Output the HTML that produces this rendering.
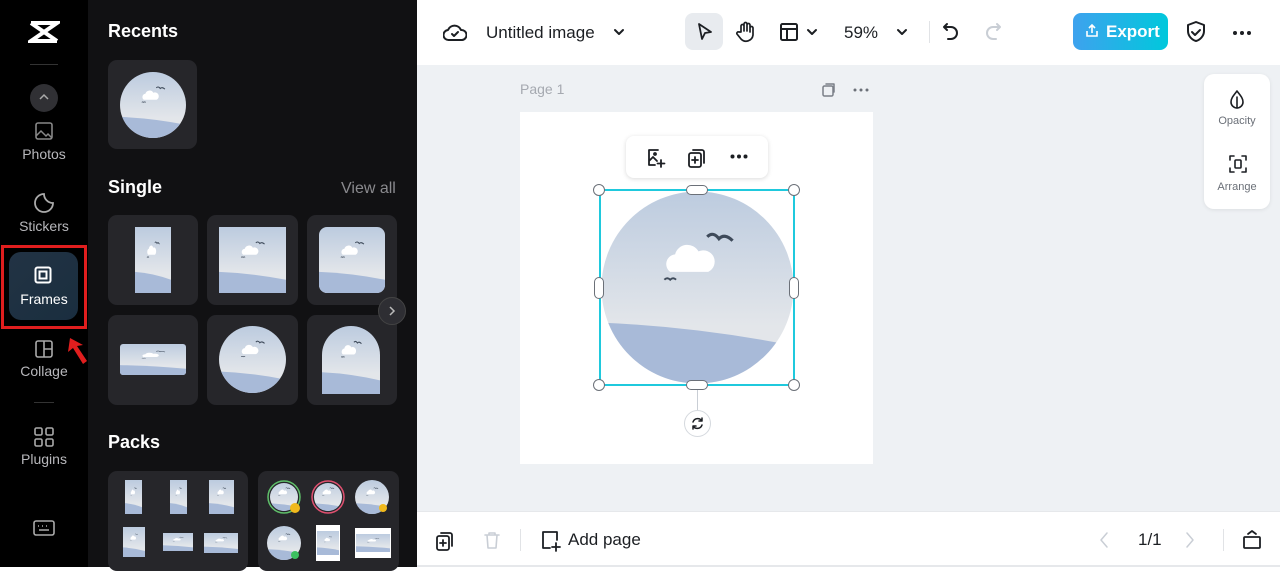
<!DOCTYPE html>
<html><head><meta charset="utf-8"><style>
*{margin:0;padding:0;box-sizing:border-box}
body{width:1280px;height:567px;overflow:hidden;font-family:"Liberation Sans",sans-serif;background:#fff;position:relative}
.a{position:absolute}
.nav{left:0;top:0;width:88px;height:567px;background:#000}
.navlbl{position:absolute;width:88px;text-align:center;color:#b8b8bc;font-size:14px}
.panel{left:88px;top:0;width:329px;height:567px;background:#111113}
.h{position:absolute;color:#fff;font-weight:bold;font-size:18px}
.card{position:absolute;background:#26262a;border-radius:9px}
.card svg{position:absolute}
.top{left:417px;top:0;width:863px;height:65px;background:#fff}
.canvas{left:417px;top:65px;width:863px;height:446px;background:#eef1f4}
.bot{left:417px;top:511px;width:863px;height:56px;background:#fff;border-top:1px solid #e6e8eb;border-bottom:2px solid #e6e8eb}
.ic{position:absolute;stroke:#1c1f23;fill:none;stroke-width:2;stroke-linecap:round;stroke-linejoin:round}
.hd{position:absolute;width:12px;height:12px;border:1px solid #6b7078;background:#fff;border-radius:50%}
</style></head><body>
<svg width="0" height="0" style="position:absolute">
<defs>
<linearGradient id="g" x1="0" y1="0" x2="0" y2="1"><stop offset="0" stop-color="#bccbdf"/><stop offset=".7" stop-color="#e3e6ea"/></linearGradient>
<symbol id="img" viewBox="0 0 100 100" preserveAspectRatio="none">
<rect width="100" height="100" fill="url(#g)"/>
<path d="M0 68 Q50 70 100 80 L100 100 L0 100Z" fill="#a8bad8"/>
<path d="M36 42 a5 5 0 0 1 2.5-9 a6.5 6.5 0 0 1 12-1.5 a5 5 0 0 1 5 10.5Z" fill="#fff"/>
<path d="M55 24 q3-3 6 1 q3-3 7 1" stroke="#3e4a5a" stroke-width="1.6" fill="none"/>
<path d="M33 46 q1.5-1.5 3 0 q1.5-1.5 3 0" stroke="#3e4a5a" stroke-width="1" fill="none"/>
</symbol>
</defs></svg>

<div class="a nav">
<svg class="a" style="left:28px;top:20px" width="32" height="24" viewBox="0 0 32 24"><path d="M3 3h26L3 21h26M3 3l26 18" stroke="#fff" stroke-width="4" fill="none"/></svg>
<div class="a" style="left:30px;top:64px;width:28px;height:1px;background:#333"></div>
<div class="a" style="left:30px;top:84px;width:28px;height:28px;border-radius:50%;background:#303034"></div>
<svg class="a" style="left:38px;top:92px" width="12" height="10"><path d="M2 7l4-4 4 4" stroke="#aaa" fill="none" stroke-width="1.5"/></svg>
<svg class="a" style="left:34px;top:121px" width="20" height="20"><rect x="2" y="2" width="16" height="16" rx="2" stroke="#888" fill="none" stroke-width="1.6"/><path d="M2 15l5-5 5 5 2-2 4 4" stroke="#888" fill="none" stroke-width="1.5"/></svg>
<div class="navlbl" style="top:146px">Photos</div>
<svg class="a" style="left:33px;top:192px" width="22" height="22"><path d="M11 2a9 9 0 1 0 9 9 A9 9 0 0 1 11 2z" stroke="#aaa" fill="none" stroke-width="1.8"/></svg>
<div class="navlbl" style="top:218px">Stickers</div>
<div class="a" style="left:1px;top:245px;width:86px;height:84px;border:3px solid #e01e1e"></div>
<div class="a" style="left:9px;top:252px;width:69px;height:68px;border-radius:12px;background:linear-gradient(135deg,#223344,#1a2e3f)"></div>
<svg class="a" style="left:34px;top:266px" width="18" height="18"><rect x="1.5" y="1.5" width="15" height="15" rx="2" stroke="#fff" fill="none" stroke-width="2"/><rect x="5.5" y="5.5" width="7" height="7" stroke="#fff" fill="none" stroke-width="2"/></svg>
<div class="navlbl" style="top:291px;color:#fff">Frames</div>
<svg class="a" style="left:64px;top:334px" width="26" height="36"><path d="M6 4l-2 14 5-4 10 16 4-3-10-15 6-1z" fill="#e01e1e"/></svg>
<svg class="a" style="left:34px;top:339px" width="20" height="20"><rect x="2" y="2" width="16" height="16" rx="2" stroke="#aaa" fill="none" stroke-width="1.6"/><path d="M10 2v16M10 10h8" stroke="#aaa" stroke-width="1.6"/></svg>
<div class="navlbl" style="top:363px">Collage</div>
<div class="a" style="left:34px;top:402px;width:20px;height:1px;background:#333"></div>
<svg class="a" style="left:33px;top:426px" width="22" height="22"><g stroke="#aaa" fill="none" stroke-width="1.6"><rect x="2" y="2" width="7" height="7" rx="1.5"/><rect x="13" y="2" width="7" height="7" rx="1.5"/><rect x="2" y="13" width="7" height="7" rx="1.5"/><rect x="13" y="13" width="7" height="7" rx="1.5"/></g></svg>
<div class="navlbl" style="top:451px">Plugins</div>
<svg class="a" style="left:33px;top:519px" width="22" height="18"><rect x="1" y="2" width="20" height="14" rx="2" stroke="#aaa" fill="none" stroke-width="1.6"/><path d="M5 7h1M9 7h1M13 7h1M17 7h0M6 11h10" stroke="#aaa" stroke-width="1.6"/></svg>
</div>

<div class="a panel">
<div class="h" style="left:20px;top:21px">Recents</div>
<div class="card" style="left:20px;top:60px;width:89px;height:89px"><svg style="left:12px;top:12px" width="66" height="66"><clipPath id="c0"><circle cx="33" cy="33" r="33"/></clipPath><use href="#img" width="66" height="66" clip-path="url(#c0)"/></svg></div>
<div class="h" style="left:20px;top:177px">Single</div>
<div class="a" style="left:253px;top:180px;color:#8a8a8e;font-size:16px">View all</div>
<div class="card" style="left:20px;top:215px;width:90px;height:90px"><svg style="left:27px;top:12px" width="36" height="66"><use href="#img" width="36" height="66"/></svg></div>
<div class="card" style="left:119px;top:215px;width:91px;height:90px"><svg style="left:12px;top:12px" width="67" height="66"><use href="#img" width="67" height="66"/></svg></div>
<div class="card" style="left:219px;top:215px;width:90px;height:90px"><svg style="left:12px;top:12px" width="66" height="66"><clipPath id="c1"><rect width="66" height="66" rx="8"/></clipPath><use href="#img" width="66" height="66" clip-path="url(#c1)"/></svg></div>
<div class="card" style="left:20px;top:315px;width:90px;height:90px"><svg style="left:12px;top:29px" width="66" height="31"><clipPath id="c2"><rect width="66" height="31" rx="3"/></clipPath><use href="#img" width="66" height="31" clip-path="url(#c2)"/></svg></div>
<div class="card" style="left:119px;top:315px;width:91px;height:90px"><svg style="left:12px;top:11px" width="67" height="67"><clipPath id="c3"><circle cx="33.5" cy="33.5" r="33.5"/></clipPath><use href="#img" width="67" height="67" clip-path="url(#c3)"/></svg></div>
<div class="card" style="left:219px;top:315px;width:90px;height:90px"><svg style="left:15px;top:11px" width="58" height="68"><clipPath id="c4"><path d="M0 68V29a29 29 0 0 1 58 0v39z"/></clipPath><use href="#img" width="58" height="68" clip-path="url(#c4)"/></svg></div>
<div class="a" style="left:290px;top:297px;width:28px;height:28px;border-radius:50%;background:#2e2e33;border:1px solid #444"></div>
<svg class="a" style="left:299px;top:305px" width="10" height="12"><path d="M3 2l4 4-4 4" stroke="#bbb" fill="none" stroke-width="1.5"/></svg>
<div class="h" style="left:20px;top:432px">Packs</div>
<div class="card" style="left:20px;top:471px;width:140px;height:100px">
<svg style="left:17px;top:9px" width="17" height="34"><use href="#img" width="17" height="34"/></svg>
<svg style="left:62px;top:9px" width="17" height="34"><use href="#img" width="17" height="34"/></svg>
<svg style="left:101px;top:9px" width="25" height="34"><use href="#img" width="25" height="34"/></svg>
<svg style="left:15px;top:56px" width="22" height="30"><use href="#img" width="22" height="30"/></svg>
<svg style="left:55px;top:62px" width="30" height="18"><use href="#img" width="30" height="18"/></svg>
<svg style="left:96px;top:62px" width="34" height="20"><use href="#img" width="34" height="20"/></svg>
</div>
<div class="card" style="left:170px;top:471px;width:141px;height:100px">
<svg style="left:9px;top:9px" width="34" height="34"><clipPath id="d1"><circle cx="17" cy="17" r="14"/></clipPath><use href="#img" width="34" height="34" clip-path="url(#d1)"/><circle cx="17" cy="17" r="16" stroke="#5fbf6a" stroke-width="1.5" fill="none"/><circle cx="28" cy="28" r="5" fill="#f0b91c"/></svg>
<svg style="left:53px;top:9px" width="34" height="34"><clipPath id="d2"><circle cx="17" cy="17" r="14"/></clipPath><use href="#img" width="34" height="34" clip-path="url(#d2)"/><circle cx="17" cy="17" r="16" stroke="#e05070" stroke-width="1.5" fill="none"/></svg>
<svg style="left:97px;top:9px" width="34" height="34"><clipPath id="d3"><circle cx="17" cy="17" r="17"/></clipPath><use href="#img" width="34" height="34" clip-path="url(#d3)"/><circle cx="28" cy="28" r="4" fill="#f0b91c"/></svg>
<svg style="left:9px;top:55px" width="36" height="36"><clipPath id="d4"><circle cx="17" cy="17" r="17"/></clipPath><use href="#img" width="34" height="34" clip-path="url(#d4)"/><circle cx="28" cy="29" r="4" fill="#3cc060"/></svg>
<svg style="left:58px;top:54px" width="24" height="36"><rect width="24" height="36" fill="#fff"/><use href="#img" x="1" y="6" width="22" height="24"/></svg>
<svg style="left:97px;top:57px" width="36" height="30"><rect width="36" height="30" fill="#fff"/><use href="#img" x="1" y="6" width="34" height="18"/></svg>
</div>
</div>
<div class="a" style="left:417px;top:253px;width:8px;height:60px;background:#2a2a2e;border-radius:0 6px 6px 0"></div>

<div class="a top">
<svg class="ic" style="left:26px;top:22px" width="24" height="22" viewBox="0 0 24 22"><path d="M6 18a5 5 0 0 1-1-10 7 7 0 0 1 13 0 5 5 0 0 1 1 10z"/><path d="M9 12l2 2 4-4"/></svg>
<div class="a" style="left:69px;top:23px;font-size:17px;color:#1c1f23">Untitled image</div>
<svg class="ic" style="left:196px;top:27px" width="12" height="10"><path d="M2 3l4 4 4-4"/></svg>
<div class="a" style="left:268px;top:13px;width:38px;height:37px;border-radius:8px;background:#e8ebef"></div>
<svg class="ic" style="left:279px;top:22px" width="18" height="20"><path d="M3 2l12 8-6 1-3 6z" stroke-width="1.8"/></svg>
<svg class="ic" style="left:318px;top:20px" width="22" height="24"><path d="M6 12V6a1.5 1.5 0 0 1 3 0v5V4a1.5 1.5 0 0 1 3 0v7V5a1.5 1.5 0 0 1 3 0v7-4a1.5 1.5 0 0 1 3 0v7a7 7 0 0 1-12 4l-4-5a1.5 1.5 0 0 1 2-2z" stroke-width="1.7"/></svg>
<svg class="ic" style="left:362px;top:22px" width="20" height="20"><rect x="2" y="2" width="16" height="16" rx="1.5"/><path d="M2 7h16M8 7v11"/></svg>
<svg class="ic" style="left:389px;top:27px" width="12" height="10"><path d="M2 3l4 4 4-4"/></svg>
<div class="a" style="left:427px;top:23px;font-size:17px;color:#1c1f23">59%</div>
<svg class="ic" style="left:479px;top:27px" width="12" height="10"><path d="M2 3l4 4 4-4"/></svg>
<div class="a" style="left:512px;top:21px;width:1px;height:22px;background:#e1e3e6"></div>
<svg class="ic" style="left:524px;top:21px" width="20" height="22"><path d="M6 3L3 6l3 3M3 6h7a6 6 0 0 1 0 12H7"/></svg>
<svg class="ic" style="left:566px;top:21px;stroke:#c9ced5" width="20" height="22"><path d="M14 3l3 3-3 3M17 6h-7a6 6 0 0 0 0 12h3"/></svg>
<div class="a" style="left:656px;top:13px;width:95px;height:37px;border-radius:8px;background:linear-gradient(90deg,#3ea2ee,#00c8dc);color:#fff;font-weight:bold;font-size:17px;padding:9px 0 0 33px">Export</div>
<svg class="a" style="left:667px;top:23px" width="16" height="16"><path d="M8 10V2M5 5l3-3 3 3M3 8v5h10V8" stroke="#fff" fill="none" stroke-width="1.6"/></svg>
<svg class="ic" style="left:768px;top:20px" width="22" height="24"><path d="M11 2l8 3v6c0 5-4 9-8 10-4-1-8-5-8-10V5z"/><path d="M7 12l3 3 5-5"/></svg>
<svg class="a" style="left:815px;top:30px" width="20" height="6"><circle cx="3" cy="3" r="2" fill="#1c1f23"/><circle cx="10" cy="3" r="2" fill="#1c1f23"/><circle cx="17" cy="3" r="2" fill="#1c1f23"/></svg>
</div>

<div class="a canvas">
<div class="a" style="left:103px;top:16px;color:#a5a9b0;font-size:14px">Page 1</div>
<svg class="ic" style="left:404px;top:17px;stroke:#7a7f87;stroke-width:1.5" width="16" height="16"><rect x="2" y="4" width="10" height="10" rx="1.5"/><path d="M5 2h8v8"/></svg>
<svg class="a" style="left:436px;top:23px" width="16" height="4"><circle cx="2" cy="2" r="1.5" fill="#6b7078"/><circle cx="8" cy="2" r="1.5" fill="#6b7078"/><circle cx="14" cy="2" r="1.5" fill="#6b7078"/></svg>
<div class="a" style="left:103px;top:47px;width:353px;height:352px;background:#fff"></div>
<div class="a" style="left:787px;top:9px;width:66px;height:135px;background:#fff;border-radius:10px;box-shadow:0 1px 4px rgba(0,0,0,.08)"></div>
<svg class="ic" style="left:811px;top:24px;stroke-width:1.6" width="18" height="22"><path d="M9 2c3 4 6 7 6 11a6 6 0 0 1-12 0c0-4 3-7 6-11z"/><path d="M9 8v11" /></svg>
<div class="a" style="left:787px;top:50px;width:66px;text-align:center;font-size:11px;color:#6b7078">Opacity</div>
<svg class="ic" style="left:811px;top:89px;stroke-width:1.6" width="20" height="20"><path d="M2 6V2h4M14 2h4v4M18 14v4h-4M6 18H2v-4"/><rect x="7" y="6" width="6" height="8" rx="1"/></svg>
<div class="a" style="left:787px;top:116px;width:66px;text-align:center;font-size:11px;color:#6b7078">Arrange</div>
</div>

<div class="a" style="left:626px;top:136px;width:142px;height:42px;background:#fff;border-radius:8px;box-shadow:0 1px 5px rgba(0,0,0,.15)"></div>
<svg class="ic" style="left:645px;top:147px;stroke-width:1.8" width="22" height="22"><path d="M13 3H4v15h6M4 14l4-4 4 4"/><circle cx="10" cy="7" r="1"/><path d="M16 13v7M12.5 16.5h7"/></svg>
<svg class="ic" style="left:687px;top:147px;stroke-width:1.8" width="20" height="22"><rect x="2" y="6" width="12" height="14" rx="2"/><path d="M6 3h9a2 2 0 0 1 2 2v11M8 10v6M5 13h6"/></svg>
<svg class="a" style="left:730px;top:154px" width="18" height="5"><circle cx="2.5" cy="2.5" r="2" fill="#1c1f23"/><circle cx="9" cy="2.5" r="2" fill="#1c1f23"/><circle cx="15.5" cy="2.5" r="2" fill="#1c1f23"/></svg>

<svg class="a" style="left:600px;top:190px" width="195" height="195"><clipPath id="big"><circle cx="97.5" cy="97.5" r="96"/></clipPath><use href="#img" width="195" height="195" clip-path="url(#big)"/></svg>
<div class="a" style="left:599px;top:189px;width:196px;height:197px;border:2px solid #1fc9dd"></div>
<div class="hd" style="left:593px;top:184px"></div><div class="hd" style="left:788px;top:184px"></div>
<div class="hd" style="left:593px;top:379px"></div><div class="hd" style="left:788px;top:379px"></div>
<div class="a" style="left:686px;top:185px;width:22px;height:10px;border:1px solid #6b7078;background:#fff;border-radius:5px"></div>
<div class="a" style="left:686px;top:380px;width:22px;height:10px;border:1px solid #6b7078;background:#fff;border-radius:5px"></div>
<div class="a" style="left:594px;top:277px;width:10px;height:22px;border:1px solid #6b7078;background:#fff;border-radius:5px"></div>
<div class="a" style="left:789px;top:277px;width:10px;height:22px;border:1px solid #6b7078;background:#fff;border-radius:5px"></div>
<div class="a" style="left:697px;top:390px;width:1px;height:20px;background:#c9ced5"></div>
<div class="a" style="left:684px;top:410px;width:27px;height:27px;border-radius:50%;background:#fff;border:1px solid #d5d9de"></div>
<svg class="ic" style="left:689px;top:415px;stroke-width:1.5" width="17" height="17"><path d="M13 6a5 5 0 0 0-9 1M4 11a5 5 0 0 0 9-1M13 3v3h-3M4 14v-3h3"/></svg>

<div class="a bot">
<svg class="ic" style="left:18px;top:18px;stroke-width:1.8" width="20" height="22"><rect x="2" y="6" width="12" height="14" rx="2"/><path d="M6 3h9a2 2 0 0 1 2 2v11M8 10v6M5 13h6"/></svg>
<svg class="ic" style="left:66px;top:18px;stroke:#c9ced5;stroke-width:1.6" width="18" height="20"><path d="M2 5h14M6 5V3h6v2M4 5l1 13h8l1-13"/></svg>
<div class="a" style="left:103px;top:17px;width:1px;height:22px;background:#e1e3e6"></div>
<svg class="ic" style="left:123px;top:17px;stroke-width:1.8" width="22" height="24"><path d="M10 19H3V3h14v8M16 14v8M12 18h8"/></svg>
<div class="a" style="left:151px;top:18px;font-size:17px;color:#1c1f23">Add page</div>
<svg class="ic" style="left:681px;top:19px;stroke:#c9ced5;stroke-width:1.5" width="12" height="18"><path d="M9 2L3 9l6 7"/></svg>
<div class="a" style="left:721px;top:18px;font-size:17px;color:#1c1f23">1/1</div>
<svg class="ic" style="left:767px;top:19px;stroke:#c9ced5;stroke-width:1.5" width="12" height="18"><path d="M3 2l6 7-6 7"/></svg>
<div class="a" style="left:806px;top:17px;width:1px;height:22px;background:#e1e3e6"></div>
<svg class="ic" style="left:825px;top:16px;stroke-width:1.8" width="20" height="22"><rect x="2" y="9" width="16" height="11" rx="1"/><path d="M6 6l4-3 4 3"/></svg>
</div>
</body></html>
